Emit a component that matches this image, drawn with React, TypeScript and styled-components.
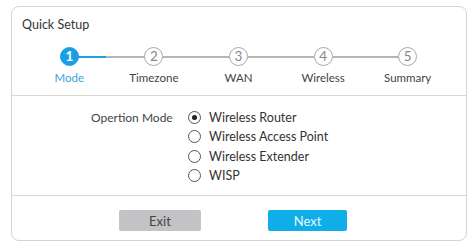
import React from "react";
import styled, { createGlobalStyle } from "styled-components";

const Global = createGlobalStyle`
  html, body { margin: 0; padding: 0; background: #fff; }
  body { font-family: Lato, "Noto Sans", sans-serif; color: #333; }
`;

const Card = styled.div`
  box-sizing: border-box;
  margin: 6px 0 0 11px;
  width: 456px;
  height: 235px;
  border: 1px solid #d4d4d4;
  border-radius: 8px;
  display: flex;
  flex-direction: column;
`;

const Header = styled.div`
  height: 89px;
  box-sizing: border-box;
  padding: 10px 0 0 10px;
  border-bottom: 1px solid #d8d8d8;
`;

const Title = styled.div`
  font-size: 12.5px;
  line-height: 16px;
  color: #333;
`;

const Steps = styled.div`
  display: grid;
  grid-template-columns: repeat(5, 84.6px);
  margin: 14px 0 0 5px;
`;

const Step = styled.div<{ $line?: "active" | "idle" | "none" }>`
  position: relative;
  display: flex;
  flex-direction: column;
  align-items: center;
  &::after {
    content: "";
    display: ${(p) => (p.$line === "none" ? "none" : "block")};
    position: absolute;
    top: 9px;
    left: calc(50% + 9px);
    width: 66.6px;
    height: 1.5px;
    background: ${(p) =>
      p.$line === "active"
        ? "linear-gradient(to right, #1e9fe0 0, #1e9fe0 28px, #b5b5b5 28px)"
        : "#b5b5b5"};
  }
`;

const Circle = styled.div<{ $active?: boolean }>`
  box-sizing: border-box;
  width: 19px;
  height: 19px;
  border-radius: 50%;
  border: 1px solid ${(p) => (p.$active ? "#1a9fe2" : "#a8a8a8")};
  background: ${(p) => (p.$active ? "#1a9fe2" : "#fff")};
  color: ${(p) => (p.$active ? "#fff" : "#888")};
  font-size: 13.5px;
  font-weight: ${(p) => (p.$active ? 700 : 400)};
  line-height: 17px;
  text-align: center;
`;

const StepLabel = styled.div<{ $active?: boolean }>`
  margin-top: 5px;
  font-size: 11.5px;
  line-height: 14px;
  color: ${(p) => (p.$active ? "#3aa4d8" : "#444")};
  white-space: nowrap;
`;

const Body = styled.div`
  height: 100px;
  box-sizing: border-box;
  padding: 12px 0 0 79px;
  border-bottom: 1px solid #d8d8d8;
  display: flex;
  align-items: flex-start;
`;

const FieldLabel = styled.div`
  width: 97px;
  font-size: 12px;
  line-height: 19.3px;
  color: #444;
`;

const RadioList = styled.div`
  display: flex;
  flex-direction: column;
`;

const RadioRow = styled.label`
  display: flex;
  align-items: center;
  height: 19.3px;
  font-size: 12.5px;
  color: #333;
`;

const RadioDot = styled.span<{ $checked?: boolean }>`
  box-sizing: border-box;
  width: 13px;
  height: 13px;
  border-radius: 50%;
  border: 1px solid #555;
  margin-right: 8px;
  display: flex;
  align-items: center;
  justify-content: center;
  &::after {
    content: "";
    display: ${(p) => (p.$checked ? "block" : "none")};
    width: 5px;
    height: 5px;
    border-radius: 50%;
    background: #222;
  }
`;

const Footer = styled.div`
  flex: 1;
  display: flex;
  align-items: flex-start;
  padding: 14px 0 0 107px;
  gap: 67px;
`;

const Button = styled.button<{ $primary?: boolean; $w: number }>`
  width: ${(p) => p.$w}px;
  height: 21px;
  border: none;
  border-radius: 2px;
  padding: 0;
  font-family: Lato, "Noto Sans", sans-serif;
  font-size: 13px;
  background: ${(p) => (p.$primary ? "#10aee9" : "#c3c3c6")};
  color: ${(p) => (p.$primary ? "#e6f7ff" : "#444")};
`;

const steps = ["Mode", "Timezone", "WAN", "Wireless", "Summary"];
const modes = ["Wireless Router", "Wireless Access Point", "Wireless Extender", "WISP"];

export default function App() {
  return (
    <>
      <Global />
      <Card>
        <Header>
          <Title>Quick Setup</Title>
          <Steps>
            {steps.map((s, i) => (
              <Step key={s} $line={i === 4 ? "none" : i === 0 ? "active" : "idle"}>
                <Circle $active={i === 0}>{i + 1}</Circle>
                <StepLabel $active={i === 0}>{s}</StepLabel>
              </Step>
            ))}
          </Steps>
        </Header>
        <Body>
          <FieldLabel>Opertion Mode</FieldLabel>
          <RadioList>
            {modes.map((m, i) => (
              <RadioRow key={m}>
                <RadioDot $checked={i === 0} />
                {m}
              </RadioRow>
            ))}
          </RadioList>
        </Body>
        <Footer>
          <Button $w={82}>Exit</Button>
          <Button $w={79} $primary>Next</Button>
        </Footer>
      </Card>
    </>
  );
}
